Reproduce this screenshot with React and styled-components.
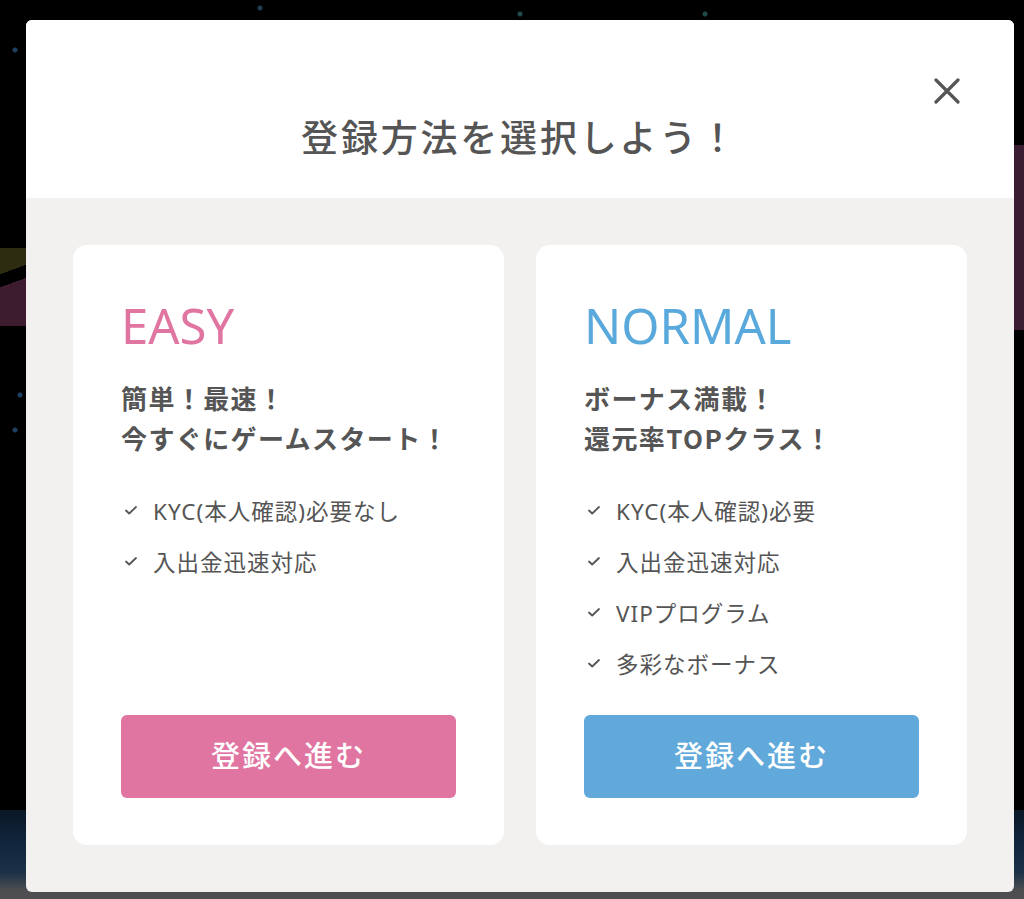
import React from 'react';
import styled, { createGlobalStyle } from 'styled-components';

const Global = createGlobalStyle`
  html, body {
    margin: 0;
    padding: 0;
    background: #000;
  }
  body {
    font-family: 'Noto Sans', 'Noto Sans CJK JP', sans-serif;
    color: #555;
  }
  * {
    box-sizing: border-box;
  }
`;

const Backdrop = styled.div`
  width: 1024px;
  height: 899px;
  overflow: hidden;
  padding: 20px 10px 7px 26px;
  background:
    radial-gradient(circle at 260px 8px, #1f3f55 0 2px, transparent 3px),
    radial-gradient(circle at 520px 14px, #1f4a4a 0 2px, transparent 3px),
    radial-gradient(circle at 705px 14px, #1f4a4a 0 2px, transparent 3px),
    radial-gradient(circle at 15px 50px, #1f3f65 0 2px, transparent 3px),
    radial-gradient(circle at 20px 395px, #1f3f65 0 2px, transparent 3px),
    radial-gradient(circle at 15px 430px, #1f3f65 0 2px, transparent 3px),
    linear-gradient(160deg, #2e2c10 0 30%, transparent 30% 45%, #3c1c2e 45% 100%) 0 248px / 26px 78px no-repeat,
    linear-gradient(#3a1d30, #3a1d30) 1014px 145px / 10px 185px no-repeat,
    linear-gradient(#0a1626, #12273d 40%, #1b3148 70%, #4c4d50 90%, #4f4f50) 0 810px / 100% 89px no-repeat,
    #000;
`;

const Modal = styled.div`
  width: 988px;
  height: 872px;
  border-radius: 6px;
  overflow: hidden;
  background: #f2f1ef;
  display: flex;
  flex-direction: column;
`;

const Header = styled.header`
  position: relative;
  height: 178px;
  background: #fff;
  display: flex;
  align-items: flex-end;
  justify-content: center;
  padding-bottom: 35px;
`;

const Title = styled.h1`
  margin: 0;
  font-family: 'Noto Sans CJK JP', sans-serif;
  font-size: 37px;
  font-weight: 500;
  letter-spacing: 2.8px;
  color: #555;
`;

const Close = styled.button`
  position: absolute;
  top: 56px;
  right: 52px;
  width: 30px;
  height: 30px;
  padding: 0;
  border: 0;
  background: none;
  cursor: pointer;
  display: flex;
  align-items: center;
  justify-content: center;
`;

const Body = styled.div`
  flex: 1;
  display: grid;
  grid-template-columns: 1fr 1fr;
  gap: 32px;
  padding: 47px;
`;

const Card = styled.section`
  background: #fff;
  border-radius: 14px;
  padding: 48px 48px 47px;
  display: flex;
  flex-direction: column;
`;

const Plan = styled.h2`
  margin: 0;
  font-family: 'Noto Sans', sans-serif;
  font-size: 49px;
  font-weight: 400;
  line-height: 64px;
  color: ${(p) => p.$color};
`;

const Lead = styled.p`
  margin: 21px 0 0;
  font-family: 'Noto Sans CJK JP', sans-serif;
  font-size: 26px;
  font-weight: 600;
  line-height: 40px;
  letter-spacing: 1.4px;
  color: #555;
`;

const List = styled.ul`
  list-style: none;
  margin: 35px 0 0;
  padding: 0;
  display: flex;
  flex-direction: column;
  gap: 17px;
`;

const Item = styled.li`
  display: flex;
  align-items: center;
  gap: 15px;
  height: 34px;
  font-family: 'Noto Sans', 'Noto Sans CJK JP', sans-serif;
  font-size: 22.5px;
  letter-spacing: 1px;
  color: #555;
`;

const Check = styled.svg`
  width: 14px;
  height: 14px;
  margin-left: 3px;
  flex: none;
`;

const Button = styled.button`
  margin-top: auto;
  height: 83px;
  padding: 0 0 5px;
  border: 0;
  border-radius: 6px;
  background: ${(p) => p.$color};
  color: #fff;
  font-family: 'Noto Sans CJK JP', sans-serif;
  font-size: 29px;
  font-weight: 500;
  letter-spacing: 2px;
  cursor: pointer;
`;

const plans = [
  {
    name: 'EASY',
    color: '#e075a1',
    button: '#e075a1',
    lead: ['簡単！最速！', '今すぐにゲームスタート！'],
    items: ['KYC(本人確認)必要なし', '入出金迅速対応'],
  },
  {
    name: 'NORMAL',
    color: '#5aa9dc',
    button: '#61a9da',
    lead: ['ボーナス満載！', '還元率TOPクラス！'],
    items: ['KYC(本人確認)必要', '入出金迅速対応', 'VIPプログラム', '多彩なボーナス'],
  },
];

function Tick() {
  return (
    <Check viewBox="0 0 14 14" fill="none">
      <path d="M2 7.5l3.2 3L12 4" stroke="#555" strokeWidth="1.8" strokeLinecap="round" strokeLinejoin="round" />
    </Check>
  );
}

export default function App() {
  return (
    <Backdrop>
      <Global />
      <Modal>
        <Header>
          <Title>登録方法を選択しよう！</Title>
          <Close aria-label="close">
            <svg width="26" height="26" viewBox="0 0 26 26">
              <path d="M2 2l22 22M24 2L2 24" stroke="#555" strokeWidth="3.2" strokeLinecap="round" />
            </svg>
          </Close>
        </Header>
        <Body>
          {plans.map((p) => (
            <Card key={p.name}>
              <Plan $color={p.color}>{p.name}</Plan>
              <Lead>
                {p.lead[0]}
                <br />
                {p.lead[1]}
              </Lead>
              <List>
                {p.items.map((t) => (
                  <Item key={t}>
                    <Tick />
                    {t}
                  </Item>
                ))}
              </List>
              <Button $color={p.button}>登録へ進む</Button>
            </Card>
          ))}
        </Body>
      </Modal>
    </Backdrop>
  );
}
